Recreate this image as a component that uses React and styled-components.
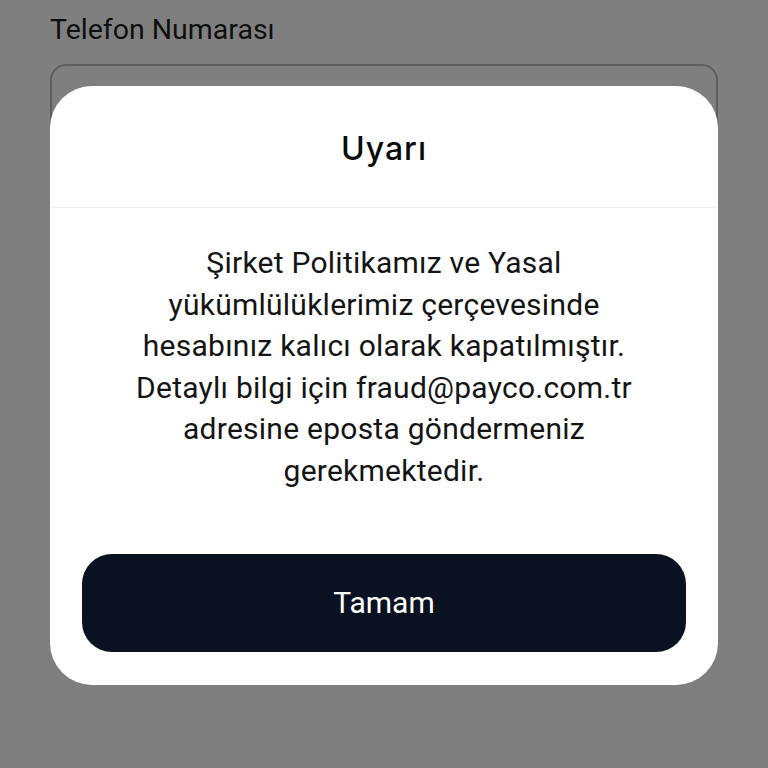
import React from 'react';
import styled, { createGlobalStyle } from 'styled-components';

const GlobalStyle = createGlobalStyle`
  html, body {
    margin: 0;
    padding: 0;
    background: #808080;
    font-family: Roboto, "Noto Sans", sans-serif;
  }
`

const Page = styled.div`
  position: relative;
  width: 768px;
  height: 768px;
  overflow: hidden;
  background: #fff;
`

const Form = styled.div`
  padding: 14px 50px 0;
  display: flex;
  flex-direction: column;
  gap: 18px;
`

const Label = styled.div`
  font-size: 28.5px;
  color: #1f1f1f;
  line-height: 32px;
`

const Input = styled.div`
  height: 70px;
  border: 2px solid #bdbdbd;
  border-radius: 16px;
`

const Overlay = styled.div`
  position: absolute;
  inset: 0;
  background: rgba(0, 0, 0, 0.5);
  display: flex;
  justify-content: center;
  align-items: flex-start;
  padding-top: 86px;
`

const Dialog = styled.div`
  width: 668px;
  background: #fff;
  border-radius: 42px;
  display: flex;
  flex-direction: column;
  padding-bottom: 33px;
`

const Header = styled.div`
  height: 122px;
  padding-top: 4px;
  box-sizing: border-box;
  display: flex;
  align-items: center;
  justify-content: center;
  border-bottom: 1.5px solid #ececec;
`

const Title = styled.h3`
  margin: 0;
  font-family: Inter, sans-serif;
  font-weight: 500;
  font-size: 32px;
  color: #0a0a0a;
  letter-spacing: 1px;
`

const Message = styled.p`
  margin: 0;
  padding: 34px 30px 0;
  text-align: center;
  font-size: 30px;
  line-height: 41.6px;
  letter-spacing: 0.25px;
  color: #141414;
`

const Button = styled.button`
  margin: 62px 32px 0;
  height: 98px;
  border: none;
  border-radius: 30px;
  background: #0a1222;
  color: #fff;
  font-family: Roboto, sans-serif;
  font-size: 30px;
`

const App = () => {
    return (
        <Page>
            <GlobalStyle />
            <Form>
                <Label>Telefon Numarası</Label>
                <Input />
            </Form>
            <Overlay>
                <Dialog>
                    <Header>
                        <Title>Uyarı</Title>
                    </Header>
                    <Message>
                        Şirket Politikamız ve Yasal<br />
                        yükümlülüklerimiz çerçevesinde<br />
                        hesabınız kalıcı olarak kapatılmıştır.<br />
                        Detaylı bilgi için fraud@payco.com.tr<br />
                        adresine eposta göndermeniz<br />
                        gerekmektedir.
                    </Message>
                    <Button>Tamam</Button>
                </Dialog>
            </Overlay>
        </Page>
    )
}

export default App;
